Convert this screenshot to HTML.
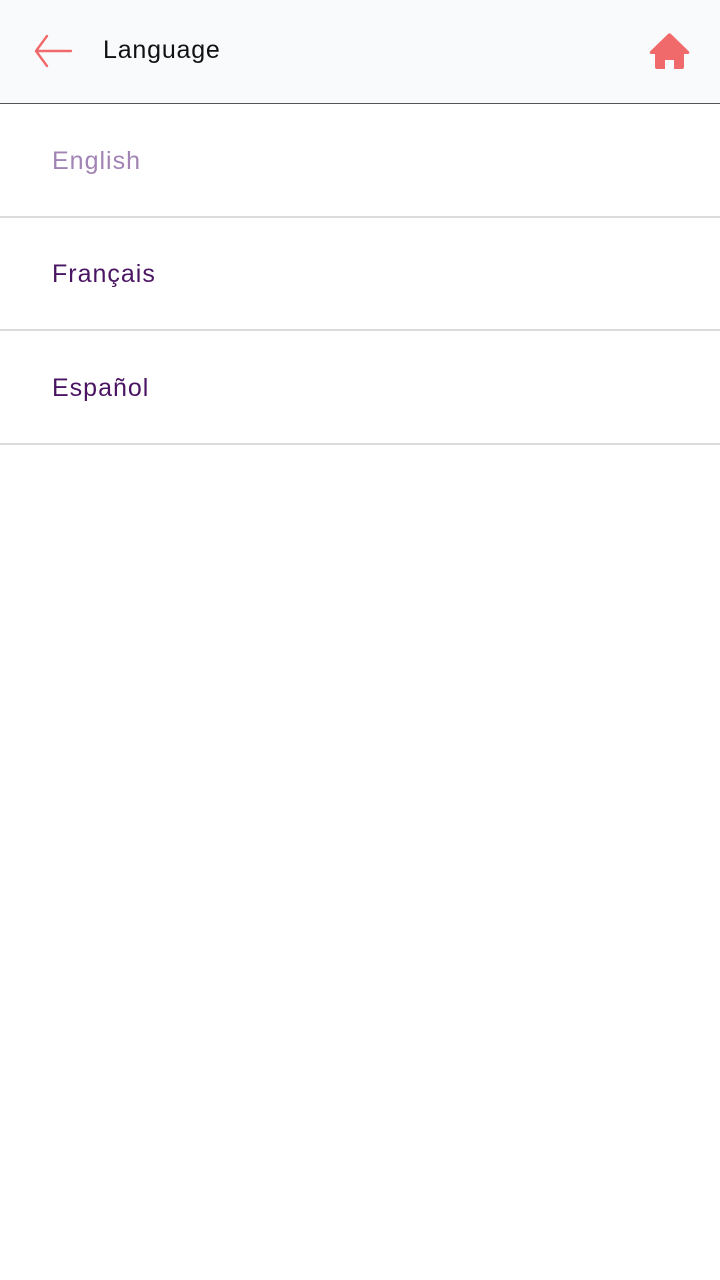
<!DOCTYPE html>
<html><head><meta charset="utf-8"><style>
body{margin:0;width:720px;height:1280px;background:#fff;font-family:"Liberation Sans",sans-serif;overflow:hidden}
.hdr{position:absolute;top:0;left:0;width:720px;height:103px;background:#f9fafc;border-bottom:1px solid #555}
.title{position:absolute;left:103px;top:36px;font-size:25px;color:#111;letter-spacing:0.8px}
.row{position:absolute;left:0;width:720px;height:112px;border-bottom:2px solid #dcdcdc}
.row span{position:absolute;left:52px;top:43px;font-size:25px;letter-spacing:1px}
</style></head><body>
<div class="hdr">
<svg style="position:absolute;left:33px;top:33px" width="42" height="36" viewBox="0 0 42 36"><path d="M38 18H4M14 3L3 18L14 33" stroke="#f06a6c" stroke-width="2.4" fill="none" stroke-linecap="round" stroke-linejoin="round"/></svg>
<div class="title">Language</div>
<svg style="position:absolute;left:648px;top:32px" width="43" height="38" viewBox="0 0 43 38"><path d="M20 2Q21.5 0.5 23 2L41 19.5Q42 22 39.5 22H36V35Q36 37 34 37H26V28H17V37H9Q7 37 7 35V22H3.5Q1 22 2 19.5Z" fill="#f06a6c"/></svg>
</div>
<div class="row" style="top:104px"><span style="color:#a184b4">English</span></div>
<div class="row" style="top:217px"><span style="color:#4a1463">Français</span></div>
<div class="row" style="top:331px"><span style="color:#4a1463">Español</span></div>
</body></html>
